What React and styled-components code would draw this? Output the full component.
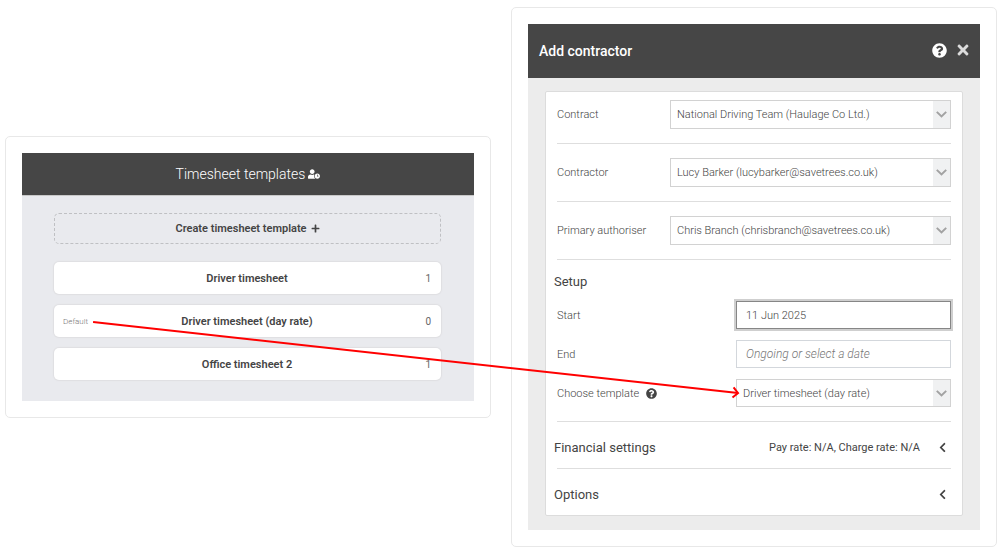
import React, { useLayoutEffect, useRef, useState } from "react";
import styled, { createGlobalStyle } from "styled-components";
import { FaUserClock, FaPlus, FaQuestionCircle, FaTimes, FaChevronLeft } from "react-icons/fa";

const GlobalStyle = createGlobalStyle`
  *, *::before, *::after { box-sizing: border-box; }
  body {
    margin: 0;
    background: #fff;
    color: #444;
    font-family: Roboto, "Liberation Sans", sans-serif;
    font-size: 11px;
  }
  button, input, select { font: inherit; color: inherit; margin: 0; }
  h1, h2, h3, ul { margin: 0; padding: 0; font: inherit; }
  svg { display: block; flex: none; }
`;

const Page = styled.main`
  position: relative;
  display: grid;
  grid-template-columns: 1fr 1fr;
  align-items: center;
  gap: 20px;
  padding: 7px 7px 4px 5px;
`;

const Frame = styled.section`
  padding: 16px;
  border: 1px solid #e8e8e8;
  border-radius: 5px;
  background: #fff;
`;

const TemplatesHeader = styled.header`
  display: flex;
  align-items: center;
  justify-content: center;
  gap: 3px;
  height: 43px;
  border-bottom: 1px solid #c8c8c8;
  background: #464646;
  color: #fff;
  font-size: 14px;
  font-weight: 300;
`;

const TemplatesBody = styled.div`
  padding: 17px 33px 21px 32px;
  background: #e9eaee;
`;

const CreateButton = styled.button`
  display: flex;
  align-items: center;
  justify-content: center;
  gap: 4px;
  width: 100%;
  height: 31px;
  padding: 0;
  border: 1px dashed #bfc0c3;
  border-radius: 5px;
  background: none;
  font-size: 11px;
  font-weight: 600;
`;

const TemplateList = styled.ul`
  display: grid;
  gap: 11px;
  margin-top: 18px;
  list-style: none;
`;

const TemplateRow = styled.button`
  display: grid;
  grid-template-columns: 1fr auto 1fr;
  align-items: center;
  width: 100%;
  height: 32px;
  padding: 0 10px 0 9px;
  border: 0;
  border-radius: 5px;
  background: #fff;
  box-shadow: 0 0 1px 1px #dfdfe2;
`;

const TemplateTag = styled.span`
  justify-self: start;
  color: #777;
  font-size: 8px;
  font-weight: 300;
`;

const TemplateName = styled.span`
  grid-column: 2;
  font-size: 11px;
  font-weight: 600;
`;

const TemplateCount = styled.span`
  justify-self: end;
  color: #666;
  font-size: 10px;
`;

const DialogHeader = styled.header`
  display: flex;
  align-items: center;
  gap: 8px;
  height: 54px;
  padding: 0 9px 2px 11px;
  background: #464646;
  color: #fff;
`;

const DialogTitle = styled.h1`
  flex: 1;
  padding-top: 2px;
  font-size: 14px;
  font-weight: 500;
`;

const IconButton = styled.button`
  display: flex;
  padding: 0;
  border: 0;
  background: none;
  color: ${(p) => p.$color || "#fff"};
`;

const DialogBody = styled.div`
  padding: 13px 17px 14px;
  background: #ececec;
`;

const Card = styled.form`
  padding: 0 11px 0 8px;
  border: 1px solid #dcdcdc;
  border-radius: 2px;
  background: #fff;
`;

const Divider = styled.hr`
  height: 1px;
  margin: 0 0 0 3px;
  border: 0;
  background: #dedede;
`;

const Field = styled.div`
  display: grid;
  grid-template-columns: ${(p) => (p.$wide ? "113px" : "179px")} 1fr;
  align-items: center;
  margin-left: 3px;
  padding: ${(p) => (p.$first ? "8px 0 14px" : p.$wide ? "14px 0" : "0")};
`;

const FieldLabel = styled.div`
  display: flex;
  align-items: center;
  gap: 7px;
  font-size: 11px;
  font-weight: 300;
`;

const SelectBox = styled.div`
  display: grid;
  height: ${(p) => (p.$tall ? "29px" : "28px")};
  border: 1px solid #d2d2d2;
  background: #fff;

  & > * { grid-area: 1 / 1; }
`;

const SelectInput = styled.select`
  appearance: none;
  width: 100%;
  padding: 0 24px 0 6px;
  border: 0;
  background: none;
  font-size: 11px;
  font-weight: 300;
`;

const SelectArrow = styled.span`
  display: grid;
  place-items: center;
  justify-self: end;
  width: 17px;
  background: #f0f1f2;
  color: #a2a2a2;
  pointer-events: none;
`;

const TextInput = styled.input`
  width: 100%;
  height: 28px;
  padding: 0 9px;
  border: 1px solid ${(p) => (p.$active ? "#868686" : "#d3d7dc")};
  background: #fff;
  box-shadow: ${(p) => (p.$active ? "0 0 0 2px #cfcfcf" : "none")};
  outline: 0;
  font-size: 11px;
  font-weight: 300;

  &::placeholder { color: #777; font-size: 12px; font-style: italic; opacity: 1; }
`;

const SetupTitle = styled.h2`
  padding: 13px 0 10px;
  font-size: 13px;
  line-height: 18px;
`;

const SetupFields = styled.div`
  display: grid;
  gap: 11px;
  padding-bottom: 14px;
`;

const SectionToggle = styled.button`
  display: flex;
  align-items: center;
  gap: 17px;
  width: 100%;
  height: 46px;
  padding: 4px 3px 0 0;
  border: 0;
  background: none;
`;

const SectionName = styled.span`
  flex: 1;
  text-align: left;
  font-size: 13px;
`;

const SectionSummary = styled.span`
  font-size: 11px;
`;

const ArrowLayer = styled.svg`
  position: absolute;
  inset: 0;
  width: 100%;
  height: 100%;
  pointer-events: none;
`;

function Select({ id, value, tall, boxRef }) {
  return (
    <SelectBox $tall={tall} ref={boxRef}>
      <SelectInput id={id} defaultValue={value}>
        <option>{value}</option>
      </SelectInput>
      <SelectArrow>
        <svg width="11" height="7" viewBox="0 0 11 7" fill="none" stroke="currentColor" strokeWidth="2">
          <path d="M.8.9 5.5 5.4 10.2.9" />
        </svg>
      </SelectArrow>
    </SelectBox>
  );
}

const templates = [
  { name: "Driver timesheet", count: 1 },
  { name: "Driver timesheet (day rate)", count: 0, isDefault: true },
  { name: "Office timesheet 2", count: 1 },
];

const parties = [
  { id: "contract", label: "Contract", value: "National Driving Team (Haulage Co Ltd.)" },
  { id: "contractor", label: "Contractor", value: "Lucy Barker (lucybarker@savetrees.co.uk)" },
  { id: "authoriser", label: "Primary authoriser", value: "Chris Branch (chrisbranch@savetrees.co.uk)" },
];

export default function App() {
  const pageRef = useRef(null);
  const tagRef = useRef(null);
  const targetRef = useRef(null);
  const [line, setLine] = useState(null);

  // Join the default template's tag to the template drop-down.
  useLayoutEffect(() => {
    const measure = () => {
      const page = pageRef.current.getBoundingClientRect();
      const tag = tagRef.current.getBoundingClientRect();
      const target = targetRef.current.getBoundingClientRect();
      setLine({
        x1: tag.right + 5 - page.left,
        y1: tag.top + tag.height / 2 + 1 - page.top,
        x2: target.left + 2 - page.left,
        y2: target.top + target.height / 2 - page.top,
      });
    };
    measure();
    const observer = new ResizeObserver(measure);
    observer.observe(pageRef.current);
    observer.observe(tagRef.current);
    return () => observer.disconnect();
  }, []);

  const angle = line ? (Math.atan2(line.y2 - line.y1, line.x2 - line.x1) * 180) / Math.PI : 0;

  return (
    <>
      <GlobalStyle />
      <Page ref={pageRef}>
        <Frame>
          <TemplatesHeader>
            <h2>Timesheet templates</h2>
            <FaUserClock size={12} />
          </TemplatesHeader>
          <TemplatesBody>
            <CreateButton type="button">
              Create timesheet template <FaPlus size={9} />
            </CreateButton>
            <TemplateList>
              {templates.map((t) => (
                <li key={t.name}>
                  <TemplateRow type="button">
                    {t.isDefault && <TemplateTag ref={tagRef}>Default</TemplateTag>}
                    <TemplateName>{t.name}</TemplateName>
                    <TemplateCount>{t.count}</TemplateCount>
                  </TemplateRow>
                </li>
              ))}
            </TemplateList>
          </TemplatesBody>
        </Frame>

        <Frame>
          <DialogHeader>
            <DialogTitle>Add contractor</DialogTitle>
            <IconButton type="button" aria-label="Help">
              <FaQuestionCircle size={15} />
            </IconButton>
            <IconButton type="button" aria-label="Close" $color="#dcdcdc">
              <FaTimes size={16} />
            </IconButton>
          </DialogHeader>
          <DialogBody>
            <Card>
              {parties.map((p, i) => (
                <React.Fragment key={p.id}>
                  <Field $wide $first={i === 0}>
                    <FieldLabel as="label" htmlFor={p.id}>{p.label}</FieldLabel>
                    <Select id={p.id} value={p.value} tall />
                  </Field>
                  <Divider />
                </React.Fragment>
              ))}
              <SetupTitle>Setup</SetupTitle>
              <SetupFields>
                <Field>
                  <FieldLabel as="label" htmlFor="start">Start</FieldLabel>
                  <TextInput id="start" type="text" defaultValue="11 Jun 2025" $active />
                </Field>
                <Field>
                  <FieldLabel as="label" htmlFor="end">End</FieldLabel>
                  <TextInput id="end" type="text" placeholder="Ongoing or select a date" />
                </Field>
                <Field>
                  <FieldLabel>
                    <label htmlFor="template">Choose template</label>
                    <IconButton type="button" aria-label="About templates" $color="#444">
                      <FaQuestionCircle size={11} />
                    </IconButton>
                  </FieldLabel>
                  <Select id="template" value="Driver timesheet (day rate)" boxRef={targetRef} />
                </Field>
              </SetupFields>
              <Divider />
              <SectionToggle type="button" aria-expanded="false">
                <SectionName>Financial settings</SectionName>
                <SectionSummary>Pay rate: N/A, Charge rate: N/A</SectionSummary>
                <FaChevronLeft size={11} />
              </SectionToggle>
              <Divider />
              <SectionToggle type="button" aria-expanded="false">
                <SectionName>Options</SectionName>
                <FaChevronLeft size={11} />
              </SectionToggle>
            </Card>
          </DialogBody>
        </Frame>

        {line && (
          <ArrowLayer fill="none" stroke="#f00" strokeWidth="2" aria-hidden="true">
            <line {...line} />
            <path d="M-5-5 0 0-5 5" transform={`translate(${line.x2} ${line.y2}) rotate(${angle})`} />
          </ArrowLayer>
        )}
      </Page>
    </>
  );
}
